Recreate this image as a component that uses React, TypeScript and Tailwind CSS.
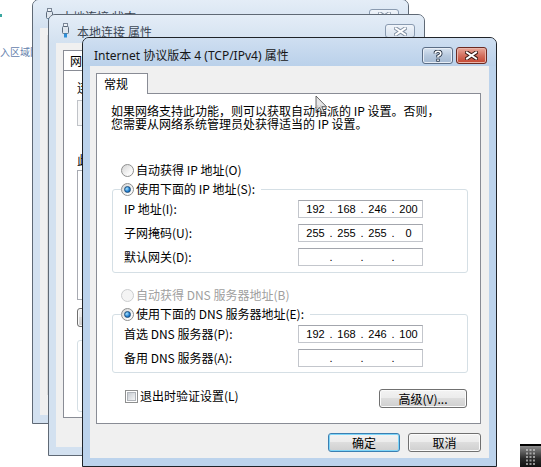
import { Fragment, type ReactNode } from 'react';

const CJK = "font-['Noto_Sans_CJK_SC',sans-serif]";
const TITLE = "font-['Noto_Sans','Noto_Sans_CJK_SC',sans-serif]";

function Radio({ checked = false, disabled = false }: { checked?: boolean; disabled?: boolean }) {
  return (
    <span
      className={`flex h-[13px] w-[13px] shrink-0 items-center justify-center rounded-full border ${
        disabled
          ? 'border-[#cbcdcf] bg-[#f4f4f4]'
          : 'border-[#8e8f8f] bg-[linear-gradient(135deg,#d4d4d4,#f9f9f9_70%)]'
      }`}
    >
      {checked && (
        <span className="h-[7px] w-[7px] rounded-full border border-[#1c4e7c] bg-[radial-gradient(circle_at_35%_35%,#a8e4ff,#1f7ccf_60%,#0d4a8a)]" />
      )}
    </span>
  );
}

function Checkbox() {
  return (
    <span className="flex h-[13px] w-[13px] shrink-0 items-center justify-center border border-[#8e8f8f] bg-white">
      <span className="h-[9px] w-[9px] border border-[#b0b4ba] bg-[linear-gradient(135deg,#c8ccd2,#f4f5f6)]" />
    </span>
  );
}

function Btn({ children, className = '', focus = false }: { children?: ReactNode; className?: string; focus?: boolean }) {
  return (
    <div
      className={`flex h-[19px] items-center justify-center rounded-[3px] border bg-[linear-gradient(to_bottom,#f3f3f3_0%,#ebebeb_50%,#dddddd_50%,#cfcfcf_100%)] text-[12px] leading-none text-black ${
        focus ? 'border-[#3c7fb1] shadow-[inset_0_0_0_1px_#7fd6f9]' : 'border-[#707070] shadow-[inset_0_0_0_1px_#fbfbfb]'
      } ${className}`}
    >
      {children}
    </div>
  );
}

function IpBox({ parts }: { parts: string[] }) {
  return (
    <div className="flex h-[18px] w-[125px] shrink-0 items-center border border-[#c3c6cc] border-t-[#a3a6ad] bg-white pl-[3px] font-['Liberation_Sans',sans-serif] text-[11px] leading-none text-black">
      {parts.map((p, i) => (
        <Fragment key={i}>
          {i > 0 && <span className="w-[4px] text-center">.</span>}
          <span className="w-[27px] text-center">{p}</span>
        </Fragment>
      ))}
    </div>
  );
}

function Row({ label, parts, first = false }: { label: string; parts: string[]; first?: boolean }) {
  return (
    <div className={`flex h-[18px] items-center pl-[11px] ${first ? 'mt-[2px]' : 'mt-[6px]'}`}>
      <span className="w-[174px] text-[12px] leading-[12px]">{label}</span>
      <IpBox parts={parts} />
    </div>
  );
}

function Group({ header, children, className = '' }: { header: ReactNode; children: ReactNode; className?: string }) {
  return (
    <div className={`ml-[15px] w-[356px] rounded-[3px] border border-[#d5dfe5] ${className}`}>
      <div className="-mt-[10px] ml-[8px] flex h-[18px] w-fit items-center gap-[2px] bg-white pr-[6px]">{header}</div>
      {children}
    </div>
  );
}

function HelpGlyph() {
  return (
    <svg width="10" height="12" viewBox="0 0 10 12">
      <path d="M2.2 3.6 Q2.2 1.2 5 1.2 Q7.8 1.2 7.8 3.6 Q7.8 5.2 5 6.2 L5 7.6" fill="none" stroke="#2b3748" strokeWidth="3.4" />
      <rect x="3.3" y="8.7" width="3.4" height="3" fill="#2b3748" />
      <path d="M2.2 3.6 Q2.2 1.2 5 1.2 Q7.8 1.2 7.8 3.6 Q7.8 5.2 5 6.2 L5 7.6" fill="none" stroke="#fff" strokeWidth="1.6" />
      <rect x="4.2" y="9.4" width="1.6" height="1.6" fill="#fff" />
    </svg>
  );
}

function CloseGlyph({ dim = false }: { dim?: boolean }) {
  return (
    <svg width="13" height="9" viewBox="0 0 13 9">
      <path d="M2 1.5 L11 7.5 M11 1.5 L2 7.5" stroke={dim ? '#8593a5' : '#3a1a14'} strokeWidth="4" strokeLinecap="square" />
      <path d="M2 1.5 L11 7.5 M11 1.5 L2 7.5" stroke="#fff" strokeWidth="2" strokeLinecap="square" />
    </svg>
  );
}

function PlugIcon() {
  return (
    <svg width="7" height="15" viewBox="0 0 7 15">
      <rect x="1.5" y="0.5" width="4" height="3" fill="#eef2f7" stroke="#7b8797" />
      <rect x="0.5" y="3.5" width="6" height="7" rx="1" fill="#dfe6ee" stroke="#5c6b7c" />
      <rect x="2" y="10.5" width="3" height="4" fill="#2f8fd8" />
    </svg>
  );
}

function BackWindow({ title, className, children }: { title: string; className: string; children?: ReactNode }) {
  return (
    <div className={`absolute flex flex-col rounded-t-[7px] border border-[#5f6975] bg-[#d3e1f0] ${className}`}>
      <div className="flex h-[28px] shrink-0 items-start rounded-t-[6px] bg-[linear-gradient(to_bottom,#e4edf7,#d3e1f0)]">
        <span className="ml-[13px] mt-[8px]">
          <PlugIcon />
        </span>
        <span className={`ml-[8px] mt-[10px] text-[12px] leading-[16px] text-[#3c4756] ${TITLE}`}>{title}</span>
        <div className="ml-auto mr-[9px] mt-[9px] flex h-[14px] w-[30px] items-center justify-center rounded-[3px] border border-[#8a9bb0] bg-[linear-gradient(to_bottom,#f1f5fa,#d6e1ee)]">
          <CloseGlyph dim />
        </div>
      </div>
      <div className="mx-[7px] mb-[8px] flex-1 bg-[#f0f0f0] pl-[7px] pt-[7px]">{children}</div>
    </div>
  );
}

export default function App() {
  return (
    <div className={`relative h-[467px] w-[541px] overflow-hidden bg-white ${CJK}`}>
      {/* desktop leftovers */}
      <span className="absolute left-0 top-[14px] h-[3px] w-[2px] bg-[#3aa6a0]" />
      <span className="absolute left-0 top-[46px] text-[10px] leading-[12px] text-[#6682ad]">入区域网</span>

      {/* status window (furthest back) */}
      <BackWindow title="本地连接 状态" className="left-[32px] top-[-1px] h-[425px] w-[377px]">
        <div className="h-[360px] w-[340px] border border-[#d8d8d8] bg-[#f7f7f7]" />
      </BackWindow>

      {/* properties window, mostly hidden behind the dialog */}
      <BackWindow title="本地连接 属性" className="left-[48px] top-[14px] h-[442px] w-[377px]">
        <div className="flex h-[20px] w-[60px] items-center border border-b-0 border-[#898c95] bg-white pl-[6px] text-[12px] leading-[12px]">
          <span className="w-[13px] overflow-hidden whitespace-nowrap">网络</span>
        </div>
        <div className="h-[348px] w-[345px] border border-[#898c95] bg-white pl-[13px] pt-[11px] text-[12px] leading-[12px]">
          <div className="w-[6px] overflow-hidden whitespace-nowrap">连接时使用:</div>
          <div className="mt-[6px] h-[26px] w-[318px] border border-[#c0c3c8] bg-[#f7f7f7]" />
          <div className="mt-[28px] w-[6px] overflow-hidden whitespace-nowrap">此连接使用下列项目:</div>
          <div className="mt-[4px] h-[130px] w-[318px] border border-[#a8abb2] bg-white" />
          <Btn className="mt-[8px] w-[75px]" />
          <div className="mt-[13px] h-[72px] w-[318px] rounded-[3px] border border-[#d5dfe5]" />
        </div>
      </BackWindow>

      {/* active TCP/IPv4 dialog */}
      <div className="absolute left-[82px] top-[37px] flex h-[430px] w-[415px] flex-col rounded-t-[7px] border border-[#1f2328] bg-[#bcd3ec]">
        <div className="flex h-[28px] shrink-0 items-start rounded-t-[6px] bg-[linear-gradient(to_bottom,#cfdff1,#bad1ea)]">
          <span className={`ml-[11px] mt-[10px] text-[12px] leading-[16px] text-[#161616] ${TITLE}`}>
            Internet 协议版本 4 (TCP/IPv4) 属性
          </span>
          <div className="ml-auto mr-[9px] mt-[9px] flex gap-[3px]">
            <div className="flex h-[17px] w-[31px] items-center justify-center rounded-[3px] border border-[#5c6e86] bg-[linear-gradient(to_bottom,#d9e4f1,#b7c9de_50%,#a5bad3)] shadow-[inset_0_0_0_1px_#e8eef6]">
              <HelpGlyph />
            </div>
            <div className="flex h-[17px] w-[31px] items-center justify-center rounded-[3px] border border-[#6b2a22] bg-[linear-gradient(to_bottom,#e9a99b,#d3705f_50%,#c4442f)] shadow-[inset_0_0_0_1px_#eab5aa]">
              <CloseGlyph />
            </div>
          </div>
        </div>

        <div className="mx-[7px] flex h-[392px] flex-col bg-[#f0f0f0] pl-[6px] pt-[7px] text-[12px] leading-[12px] text-black">
          <div className="relative z-10 -mb-px flex h-[21px] w-[52px] items-center border border-b-0 border-[#898c95] bg-white pl-[7px]">
            常规
          </div>
          <div className="h-[331px] w-[385px] border border-[#898c95] bg-white">
            <div className="ml-[14px] mt-[10px] leading-[13px]">
              <div>如果网络支持此功能，则可以获取自动指派的 IP 设置。否则，</div>
              <div>您需要从网络系统管理员处获得适当的 IP 设置。</div>
            </div>

            <div className="ml-[24px] mt-[31px] flex h-[18px] items-center gap-[2px]">
              <Radio />
              <span>自动获得 IP 地址(O)</span>
            </div>

            <Group
              className="mt-[10px]"
              header={
                <>
                  <Radio checked />
                  <span>使用下面的 IP 地址(S):</span>
                </>
              }
            >
              <Row first label="IP 地址(I):" parts={['192', '168', '246', '200']} />
              <Row label="子网掩码(U):" parts={['255', '255', '255', '0']} />
              <Row label="默认网关(D):" parts={['', '', '', '']} />
              <div className="h-[6px]" />
            </Group>

            <div className="ml-[24px] mt-[13px] flex h-[18px] items-center gap-[2px] text-[#a0a0a0]">
              <Radio disabled />
              <span>自动获得 DNS 服务器地址(B)</span>
            </div>

            <Group
              className="mt-[10px]"
              header={
                <>
                  <Radio checked />
                  <span>使用下面的 DNS 服务器地址(E):</span>
                </>
              }
            >
              <Row first label="首选 DNS 服务器(P):" parts={['192', '168', '246', '100']} />
              <Row label="备用 DNS 服务器(A):" parts={['', '', '', '']} />
              <div className="h-[5px]" />
            </Group>

            <div className="mt-[16px] flex items-start pl-[28px] pr-[13px]">
              <div className="flex h-[14px] items-center gap-[2px]">
                <Checkbox />
                <span>退出时验证设置(L)</span>
              </div>
              <Btn className="ml-auto w-[88px]">高级(V)...</Btn>
            </div>
          </div>

          <div className="mt-[9px] flex w-[385px] justify-end gap-[8px]">
            <Btn focus className="w-[72px]">
              确定
            </Btn>
            <Btn className="w-[73px]">取消</Btn>
          </div>
        </div>
      </div>

      {/* mouse pointer */}
      <svg className="absolute left-[315px] top-[95px]" width="14" height="21" viewBox="0 0 14 21">
        <path d="M1 1 L1 16 L4.6 12.6 L7.2 18.6 L9.4 17.6 L6.9 11.8 L11.6 11.8 Z" fill="#e2e2e2" fillOpacity="0.85" stroke="#4a4a4a" strokeOpacity="0.8" strokeWidth="1" />
      </svg>

      {/* taskbar corner */}
      <div className="absolute left-[520px] top-[444px] h-[23px] w-[21px] border-t-2 border-black bg-[linear-gradient(to_bottom,#8d8d8d,#2a2a2a_60%,#111111)]">
        <svg className="ml-[6px] mt-[3px]" width="10" height="17" viewBox="0 0 10 17">
          {[0, 1, 2, 3, 4].map((r) =>
            [0, 1, 2].map((c) => <rect key={`${r}-${c}`} x={c * 3.5} y={r * 3.5} width="2" height="2" fill="#c9c9c9" fillOpacity="0.7" />)
          )}
        </svg>
      </div>
    </div>
  );
}
